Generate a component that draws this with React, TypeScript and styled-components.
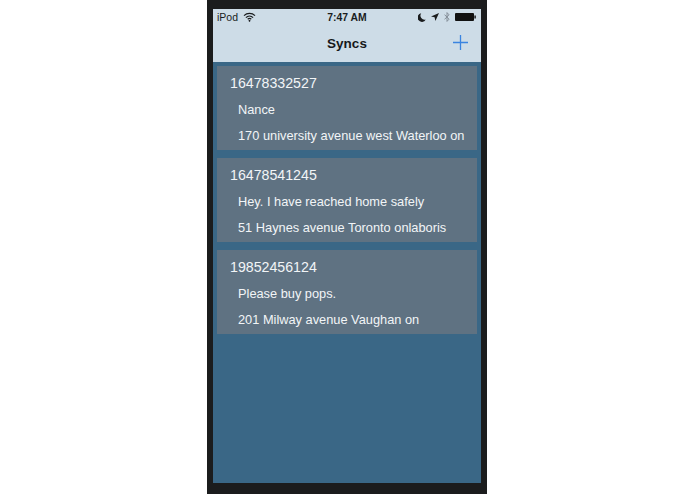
import React from 'react';
import styled, { createGlobalStyle } from 'styled-components';

const GlobalStyle = createGlobalStyle`
  html, body {
    margin: 0;
    padding: 0;
    background: #fff;
    font-family: "Liberation Sans", Arial, sans-serif;
  }
`;

const Page = styled.div`
  width: 695px;
  height: 494px;
  box-sizing: border-box;
  padding-right: 1px;
  display: flex;
  justify-content: center;
  overflow: hidden;
`;

const Device = styled.div`
  width: 280px;
  height: 494px;
  box-sizing: border-box;
  padding: 9px 6px 11px;
  background: #1b1c1d;
  display: flex;
`;

const Screen = styled.div`
  flex: 1;
  display: flex;
  flex-direction: column;
  background: #3a6786;
`;

const Header = styled.div`
  height: 53px;
  flex: none;
  background: #cddce7;
  display: flex;
  flex-direction: column;
`;

const StatusBar = styled.div`
  height: 16px;
  display: flex;
  align-items: center;
  padding: 0 5px 0 4px;
  font-size: 10.5px;
  color: #1a1c1e;
  position: relative;
`;

const Carrier = styled.span`
  margin-right: 5px;
`;

const Clock = styled.span`
  position: absolute;
  left: 0;
  right: 0;
  text-align: center;
  font-weight: bold;
  font-size: 10.4px;
`;

const StatusIcons = styled.div`
  margin-left: auto;
  display: flex;
  align-items: center;
  gap: 5px;
`;

const NavBar = styled.div`
  flex: 1;
  display: flex;
  align-items: center;
  justify-content: space-between;
  padding: 0 13px 3px 0;
`;

const NavTitle = styled.div`
  flex: 1;
  padding: 2px 0 0 28px;
  text-align: center;
  font-size: 13.5px;
  font-weight: bold;
  color: #17191b;
`;

const List = styled.div`
  display: flex;
  flex-direction: column;
  gap: 8px;
  padding: 4px 4px 0;
`;

const Card = styled.div`
  height: 84px;
  box-sizing: border-box;
  background: #5f7282;
  color: #f2f5f7;
  display: flex;
  flex-direction: column;
  padding: 9px 0 0 13px;
`;

const SyncNumber = styled.div`
  font-size: 14.2px;
  line-height: 17px;
`;

const Line = styled.div`
  font-size: 12.8px;
  line-height: 16px;
  margin: 10px 0 0 8px;
  white-space: nowrap;
`;

const syncs = [
  { number: '16478332527', message: 'Nance', address: '170 university avenue west Waterloo on' },
  { number: '16478541245', message: 'Hey. I have reached home safely', address: '51 Haynes avenue Toronto onlaboris' },
  { number: '19852456124', message: 'Please buy pops.', address: '201 Milway avenue Vaughan on' },
];

const App: React.FC = () => {
  return (
    <>
      <GlobalStyle />
      <Page>
        <Device>
          <Screen>
            <Header>
              <StatusBar>
                <Carrier>iPod</Carrier>
                <svg width="13" height="10" viewBox="0 0 13 10">
                  <path d="M1 3.6a8 8 0 0 1 11 0M2.9 5.6a5.2 5.2 0 0 1 7.2 0M4.7 7.3a2.6 2.6 0 0 1 3.6 0" fill="none" stroke="#1a1c1e" strokeWidth="1.2" />
                  <path d="M6.5 7.7l1.2 1.1-1.2 1.1-1.2-1.1z" fill="#1a1c1e" />
                </svg>
                <Clock>7:47 AM</Clock>
                <StatusIcons>
                  <svg width="8" height="9" viewBox="0 0 8 9">
                    <path d="M3.2 0.2a4.4 4.4 0 1 0 4.6 6.4A4.2 4.2 0 0 1 3.2 0.2z" fill="#1a1c1e" />
                  </svg>
                  <svg width="8" height="8" viewBox="0 0 8 8">
                    <path d="M8 0L0 3.6l3.6.7L4.4 8z" fill="#1a1c1e" />
                  </svg>
                  <svg width="6" height="10" viewBox="0 0 6 10">
                    <path d="M0.5 2.6l4.5 4.6L3 9.4V0.6l2 2.2L0.5 7.4" fill="none" stroke="#7d8690" strokeWidth="0.9" />
                  </svg>
                  <svg width="21" height="8" viewBox="0 0 21 8">
                    <rect width="19" height="8" rx="1" fill="#111" />
                    <rect x="19.4" y="2.5" width="1.4" height="3" fill="#111" />
                  </svg>
                </StatusIcons>
              </StatusBar>
              <NavBar>
                <NavTitle>Syncs</NavTitle>
                <svg width="15" height="15" viewBox="0 0 15 15">
                  <path d="M7.5 0v15M0 7.5h15" stroke="#3a84e0" strokeWidth="1.3" />
                </svg>
              </NavBar>
            </Header>
            <List>
              {syncs.map(s => (
                <Card key={s.number}>
                  <SyncNumber>{s.number}</SyncNumber>
                  <Line>{s.message}</Line>
                  <Line>{s.address}</Line>
                </Card>
              ))}
            </List>
          </Screen>
        </Device>
      </Page>
    </>
  );
};

export default App;
